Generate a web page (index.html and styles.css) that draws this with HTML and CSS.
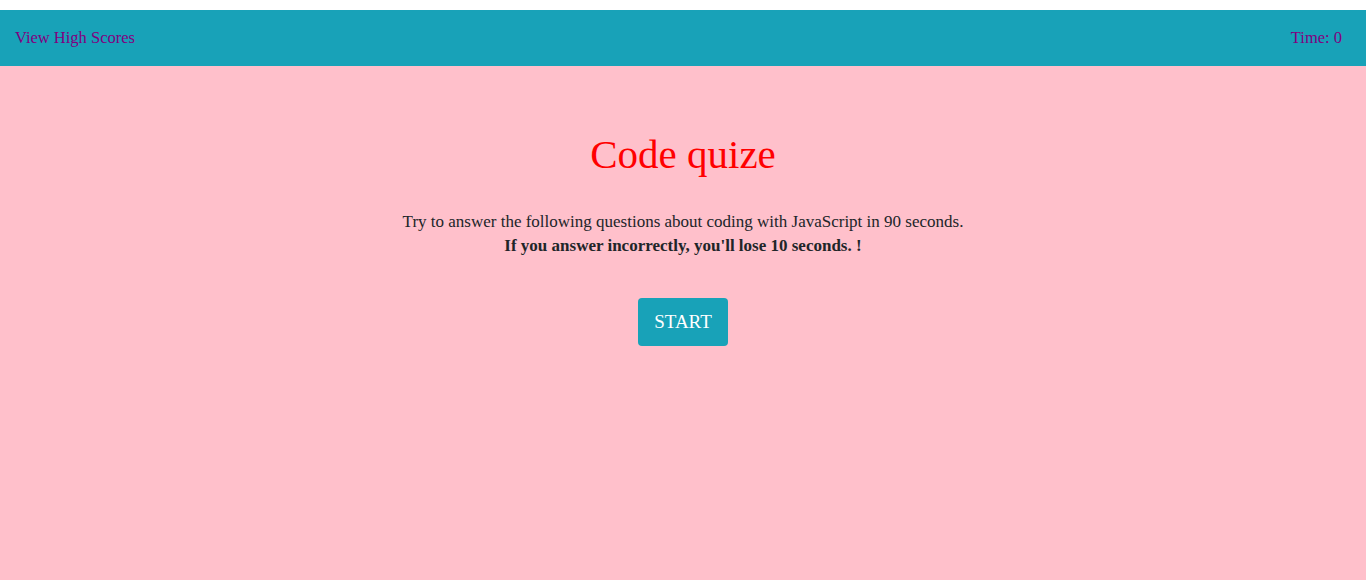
FILE: index.html
```html
<!DOCTYPE html>
<html lang="en">
<head>
<meta charset="utf-8">
<title>Code quize</title>
<link rel="stylesheet" href="styles.css">
</head>
<body>
<header class="topbar">
  <a class="scores-link" href="#">View High Scores</a>
  <span class="timer">Time: 0</span>
</header>
<main class="intro">
  <h1 class="title">Code quize</h1>
  <p class="desc">Try to answer the following questions about coding with JavaScript in 90 seconds.<br><strong>If you answer incorrectly, you'll lose 10 seconds. !</strong></p>
  <button class="start-btn">START</button>
</main>
</body>
</html>
```
FILE: styles.css
```css
html, body {
  margin: 0;
  padding: 0;
  background: #ffffff;
  height: 100%;
}
body {
  display: flex;
  flex-direction: column;
  padding-top: 10px;
  box-sizing: border-box;
  font-family: "Liberation Serif", "DejaVu Serif", serif;
  color: #212529;
}
.topbar {
  display: flex;
  justify-content: space-between;
  align-items: center;
  height: 56px;
  padding: 0 24px 0 15px;
  background: #18a2b8;
  font-size: 16.5px;
}
.scores-link, .timer {
  color: #800080;
  text-decoration: none;
}
.intro {
  flex: 1;
  background: #ffc0cb;
  display: flex;
  flex-direction: column;
  align-items: center;
  padding-top: 64px;
}
.title {
  margin: 0;
  font-weight: normal;
  font-size: 41px;
  color: #ff0000;
  line-height: 48px;
}
.desc {
  margin: 32px 0 0;
  text-align: center;
  font-size: 17px;
  line-height: 24px;
}
.start-btn {
  margin-top: 40px;
  width: 90px;
  height: 48px;
  border: none;
  border-radius: 4px;
  background: #18a2b8;
  color: #ffffff;
  font-family: inherit;
  font-size: 19px;
  cursor: pointer;
}
```
